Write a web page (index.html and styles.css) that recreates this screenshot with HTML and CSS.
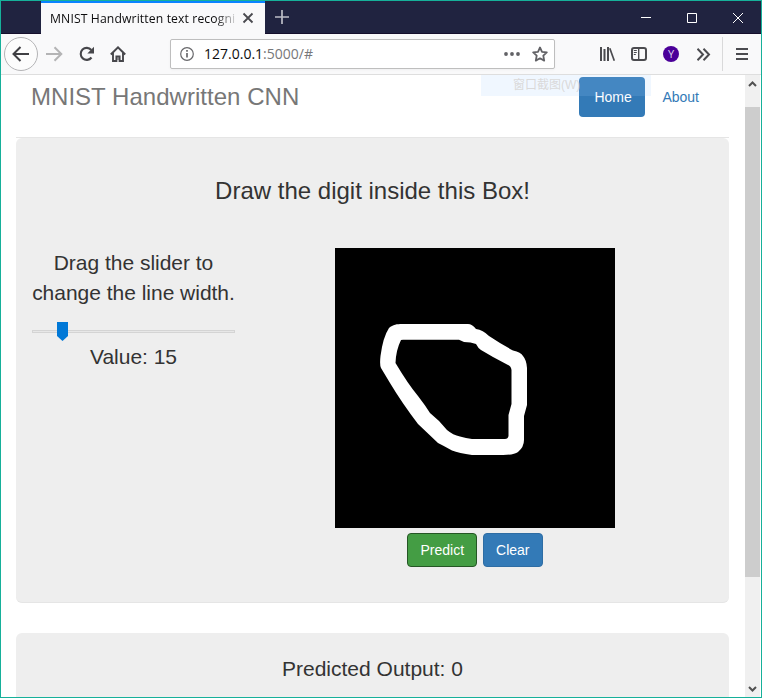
FILE: index.html
```html
<!DOCTYPE html>
<html lang="en">
<head>
<meta charset="utf-8">
<title>MNIST Handwritten text recognition</title>
<link rel="stylesheet" href="styles.css">
</head>
<body>
<div class="window">
  <div class="titlebar">
    <div class="tab">
      <span class="tab-title">MNIST Handwritten text recogni</span>
      <svg class="tab-close" width="12" height="12" viewBox="0 0 12 12"><path d="M1.5 1.5l9 9M10.5 1.5l-9 9" stroke="#4a4a4f" stroke-width="1.8"/></svg>
    </div>
    <svg class="tab-add" width="14" height="14" viewBox="0 0 14 14"><path d="M7 0v14M0 7h14" stroke="#bcbdc6" stroke-width="1.700"/></svg>
    <div class="controls">
      <svg width="46" height="32" viewBox="0 0 46 32"><path d="M18 16.5h10" stroke="#fff"/></svg>
      <svg width="46" height="32" viewBox="0 0 46 32"><path d="M18.500 12.500h9v9h-9z" fill="none" stroke="#fff"/></svg>
      <svg width="46" height="32" viewBox="0 0 46 32"><path d="M18 12l10 10M28 12l-10 10" stroke="#fff"/></svg>
    </div>
  </div>

  <div class="toolbar">
    <div class="nav-buttons">
      <svg width="36" height="36" viewBox="0 0 36 36" fill="none"><circle cx="17" cy="18" r="16.500" fill="#fcfcfc" stroke="#b4b4b6"/><path d="M25 18H10M16.500 11l-7 7 7 7" stroke="#3f3f43" stroke-width="2"/></svg>
      <svg width="18" height="16" viewBox="0 0 18 16" fill="none" stroke="#b4b4b5" stroke-width="2"><path d="M0 8h15M8.500 1.200L15.300 8l-6.800 6.800"/></svg>
      <svg width="16" height="16" viewBox="0 0 16 16" fill="none"><path d="M12.300 4A6 6 0 1 0 12.500 11.500" stroke="#47474b" stroke-width="2.100"/><path d="M15 .8v6.700H8.300z" fill="#47474b"/></svg>
      <svg width="16" height="16" viewBox="0 0 16 16" fill="none" stroke="#47474b"><path d="M.8 8.500L8 1.400l7.200 7.100" stroke-width="2"/><path d="M3 7v8h3.400v-4.600h3.200V15H13V7" stroke-width="1.900"/><path d="M8 10v4" stroke-width="1"/></svg>
    </div>
    <div class="urlbar">
      <svg width="14" height="14" viewBox="0 0 14 14"><circle cx="7" cy="7" r="6.300" fill="none" stroke="#68686b" stroke-width="1.200"/><path d="M7 6v4.500M7 3v1.700" stroke="#68686b" stroke-width="1.700"/></svg>
      <span class="url"><span class="host">127.0.0.1</span>:5000/#</span>
      <svg width="16" height="4" viewBox="0 0 16 4" fill="#626266"><circle cx="2" cy="2" r="1.900"/><circle cx="8" cy="2" r="1.900"/><circle cx="14" cy="2" r="1.900"/></svg>
      <svg class="star" width="16" height="16" viewBox="0 0 16 16"><path d="M8 1.500l2 4.300 4.800.6-3.500 3.300.9 4.900L8 12.300l-4.200 2.300.9-4.900L1.200 6.400 6 5.800z" fill="none" stroke="#626266" stroke-width="1.800" stroke-linejoin="round"/></svg>
    </div>
    <div class="tools">
      <svg width="16" height="14" viewBox="0 0 16 14" stroke="#4b4b4f" stroke-width="2"><path d="M2 0v14M5.500 2v12M9 0v14"/><path d="M10.800 1.300L15.300 13.700" stroke-width="1.700"/></svg>
      <svg width="16" height="14" viewBox="0 0 16 14" fill="none" stroke="#4b4b4f"><rect x="1" y="1" width="14" height="12" rx="2" stroke-width="2"/><path d="M7.700 1v12" stroke-width="1.400"/><path d="M2.800 3.500h3M2.800 5.500h3M2.800 7.500h2"/></svg>
      <span class="avatar">Y</span>
      <svg width="14" height="13" viewBox="0 0 14 13" fill="none" stroke="#4b4b4f" stroke-width="2"><path d="M.5 .8L6 6.500.5 12.200M6.500 .8L12 6.500l-5.500 5.700"/></svg>
    </div>
    <div class="menu"><svg width="12" height="12" viewBox="0 0 12 12" stroke="#4b4b4f" stroke-width="2"><path d="M0 1h12M0 6h12M0 11h12"/></svg></div>
  </div>

  <div class="viewport">
    <main class="page">
      <header class="header">
        <h3 class="brand">MNIST Handwritten CNN</h3>
        <nav class="nav"><a class="active">Home</a><a>About</a></nav>
      </header>
      <section class="jumbotron drawing">
        <h3>Draw the digit inside this Box!</h3>
        <div class="row">
          <div class="slider-panel">
            <p>Drag the slider to<br>change the line width.</p>
            <svg class="slider" width="203" height="20" viewBox="0 0 203 20"><rect x=".5" y="8.500" width="202" height="2" fill="#e7e7e7" stroke="#d4d4d4"/><path d="M25 0h11v14l-5.500 5L25 14z" fill="#0078d7"/></svg>
            <p>Value: 15</p>
          </div>
          <div class="canvas-panel">
            <svg class="canvas" width="280" height="280" viewBox="335 248 280 280">
              <path d="M335 248h280v280H335z"/>
              <path d="M389 328C393 324.500 397 324 402 324H468Q472 324 476 329Q483 330 489 336Q501 344 513 350.500Q521 352 523 356Q526.500 360 527 368V405L524 416V440Q524 447 518 452Q514 455 503 455H472Q459 453 452 450.500Q444 446 438 443L418 424Q402 403 390 383L381 368Q379.500 365 380.500 356Q383 337 389 328ZM401 340Q396 350 395.500 363Q408 384 418 396Q425 405 430 413Q439 420 447 430Q453 435 460 436.500Q466 438 472 439H505Q508 439 508.500 436V415L511.500 404V370Q511 366 508 365L493 357L481 350Q478 348 476 344Q471 342 464 342L459 339.700H403Z" fill="#fff" fill-rule="evenodd"/>
            </svg>
            <div class="buttons"><button class="btn success">Predict</button><button class="btn primary">Clear</button></div>
          </div>
        </div>
      </section>
      <section class="jumbotron output"><p>Predicted Output: 0</p></section>
      <div class="capture-hint">窗口截图(W)</div>
    </main>
    <aside class="scrollbar">
      <svg width="15" height="32" viewBox="0 0 15 32"><path d="M4 11l3.500-3.500L11 11" fill="none" stroke="#505050" stroke-width="2"/></svg>
      <div class="thumb"></div>
      <svg class="down" width="15" height="16" viewBox="0 0 15 16"><path d="M4 6l3.500 3.500L11 6" fill="none" stroke="#505050" stroke-width="2"/></svg>
    </aside>
  </div>
</div>
</body>
</html>
```
FILE: styles.css
```css
* { box-sizing: border-box; }
body { margin: 0; overflow: hidden; color: #333; font: 14px/20px "Liberation Sans", Arial, sans-serif; }
svg { display: block; flex: none; }
h3, p { margin: 0; font-weight: 400; }
.window { width: 762px; height: 698px; border: 1px solid #16b09a; display: flex; flex-direction: column; background: #fff; }
.titlebar { height: 33px; flex: none; display: flex; background: #202340; border-bottom: 1px solid #150f2c; }
.tab { width: 224px; height: 33px; margin-left: 40px; padding: 0 11px 0 9px; display: flex; align-items: center; background: #f9f9fa; border-top: 2px solid #0a84ff; }
.tab-title { width: 187px; white-space: nowrap; color: #0c0c0d; font: 12.2px/18px "Open Sans", sans-serif; letter-spacing: .12px; mask-image: linear-gradient(to right, #000 165px, transparent 189px); }
.tab-close { margin-left: 5px; position: relative; top: -1px; }
.tab-add { margin: 9px 0 0 10px; }
.controls { display: flex; margin-left: auto; }
.toolbar { height: 41px; flex: none; display: flex; align-items: center; background: #f9f9fa; border-bottom: 1px solid #dedede; }
.nav-buttons { width: 169px; padding-left: 3px; display: flex; align-items: center; }
.nav-buttons svg:nth-child(2) { margin-left: 6px; }
.nav-buttons svg:nth-child(3) { margin-left: 15px; }
.nav-buttons svg:nth-child(4) { margin-left: 15px; }
.urlbar { width: 385px; height: 30px; padding: 0 6px 0 9px; display: flex; align-items: center; background: #fff; border: 1px solid #bebebe; border-radius: 2px; box-shadow: 0 1px 3px #0000000b; }
.url { flex: 1; margin-left: 10px; color: #77777a; font: 14px/20px "Open Sans", sans-serif; }
.host { color: #0c0c0d; }
.star { margin-left: 12px; }
.tools { width: 167px; padding-left: 44px; display: flex; align-items: center; gap: 16px; }
.avatar { width: 16px; height: 16px; border-radius: 50%; background: #4b0099; color: #ded0ed; font: 11px/16px "Open Sans", sans-serif; text-align: center; }
.tools svg:last-child { margin-left: 2px; }
.menu { flex: 1; height: 34px; padding-left: 13px; display: flex; align-items: center; border-left: 1px solid #d9d9da; }
.viewport { flex: 1; min-height: 0; display: flex; }
.page { position: relative; width: 744px; padding: 0 16px 0 15px; overflow: hidden; }
.header { height: 63px; padding: 2px 15px 0; display: flex; justify-content: space-between; border-bottom: 1px solid #e5e5e5; }
.brand { color: #777; font-size: 24px; line-height: 40px; letter-spacing: .03px; }
.nav { display: flex; gap: 2px; }
.nav a { height: 40px; padding: 10px 15px; border-radius: 4px; color: #337ab7; }
.nav .active { width: 66px; padding-right: 0; background: #337ab7; color: #fff; }
.jumbotron { background: #eee; border-bottom: 1px solid #e5e5e5; border-radius: 6px; text-align: center; }
.jumbotron p { font-size: 21px; line-height: 30px; }
.drawing { height: 465px; padding: 40px 16px 0; }
.drawing h3 { font-size: 24px; line-height: 26px; }
.row { display: flex; margin-top: 44px; }
.slider-panel { width: 203px; white-space: nowrap; letter-spacing: -.02px; }
.slider { margin: 14px 0 0; }
.canvas-panel { margin-left: 100px; }
.buttons { display: flex; justify-content: center; gap: 6px; margin-top: 5px; }
.btn { height: 34px; padding: 0 12px; border: 1px solid; border-radius: 4px; color: #fff; font: 14px/20px "Liberation Sans", Arial, sans-serif; }
.success { background: #449d44; border-color: #255625; }
.primary { background: #337ab7; border-color: #2e6da4; }
.output { height: 100px; margin-top: 30px; padding-top: 21px; }
.capture-hint { position: absolute; left: 480px; top: 0; width: 170px; height: 21px; padding-left: 32px; background: rgba(160, 208, 255, .16); color: rgba(205, 200, 195, .65); font: 12px/20px "Liberation Sans", "Noto Sans CJK SC", sans-serif; }
.scrollbar { width: 15px; display: flex; flex-direction: column; background: #f0f0f0; }
.thumb { height: 470px; background: #cdcdcd; }
.scrollbar .down { margin-top: auto; }
```
